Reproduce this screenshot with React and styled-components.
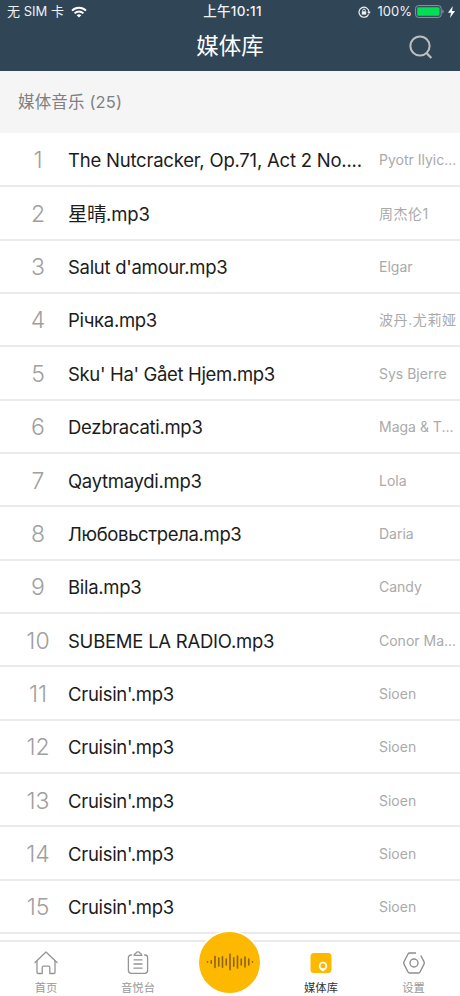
import styled, { createGlobalStyle } from "styled-components";

const GlobalStyle = createGlobalStyle`
  * {
    box-sizing: border-box;
  }
  body {
    margin: 0;
    background: #fff;
    font-family: Inter, "Noto Sans CJK SC", sans-serif;
  }
`;

const Screen = styled.div`
  width: 460px;
  height: 996px;
  display: flex;
  flex-direction: column;
  overflow: hidden;
  background: #fff;
`;

const Header = styled.header`
  height: 71px;
  flex: none;
  background: #304556;
  color: #fff;
`;

const StatusBar = styled.div`
  height: 23px;
  padding: 0 5px 0 7px;
  display: grid;
  grid-template-columns: 1fr auto 1fr;
  align-items: center;
  font-size: 13px;
  line-height: 23px;
  color: #eef2f5;
`;

const StatusGroup = styled.div`
  display: flex;
  align-items: center;
  justify-content: ${(props) => (props.$end ? "flex-end" : "flex-start")};
  gap: ${(props) => (props.$end ? "4px" : "7px")};
`;

const BatteryLevel = styled.span`
  margin: 0 -1px 0 3px;
`;

const Clock = styled.div`
  padding-left: 3px;
  font-weight: 500;
  font-size: 13.5px;
  letter-spacing: 0.3px;
`;

const TitleBar = styled.div`
  height: 48px;
  padding: 0 27px 0 0;
  display: grid;
  grid-template-columns: 1fr auto 1fr;
  align-items: center;
`;

const PageTitle = styled.h1`
  grid-column: 2;
  margin: 0 0 2px 27px;
  font-size: 22.5px;
  font-weight: 400;
  line-height: 32px;
`;

const SearchButton = styled.button`
  justify-self: end;
  display: flex;
  padding: 0;
  border: 0;
  background: none;
`;

const SectionTitle = styled.h2`
  height: 62px;
  flex: none;
  margin: 0;
  padding-left: 18px;
  background: #f5f5f5;
  color: #808080;
  font-size: 16.5px;
  font-weight: 400;
  line-height: 62px;
  letter-spacing: 0.15px;
`;

const List = styled.ul`
  height: 801.2px;
  flex: none;
  margin: 0;
  padding: 0.8px 0 0;
  list-style: none;
  display: grid;
  grid-template-rows: repeat(15, 1fr);
`;

const Row = styled.li`
  display: grid;
  grid-template-columns: 60px 303px 81px;
  column-gap: 8px;
  align-items: center;
  border-bottom: 2px solid #eaeaea;
  padding-top: 1.8px;
  white-space: nowrap;
`;

const Index = styled.span`
  padding-left: 16px;
  text-align: center;
  font-size: 23px;
  line-height: 28px;
  font-weight: 300;
  color: #a0a0a0;
`;

const Song = styled.span`
  font-size: 18.5px;
  line-height: 28px;
  letter-spacing: ${(props) => props.$spacing ?? -0.3}px;
  color: #1c1c1c;
`;

const Han = styled.span`
  font-size: 19.5px;
  line-height: 1;
  letter-spacing: -0.5px;
`;

const Artist = styled.span`
  font-size: 14px;
  line-height: 22px;
  letter-spacing: ${(props) => props.$spacing || 0}px;
  color: #aaa;
`;

const TabBar = styled.nav`
  height: 56px;
  flex: none;
  margin-top: 5.8px;
  display: grid;
  grid-template-columns: 92px 92px 91px 92px 93px;
  border-top: 2px solid #eaeaea;
`;

const Tab = styled.a`
  display: flex;
  flex-direction: column;
  align-items: center;
  padding-top: 8px;
  gap: 3px;
  font-size: 11.3px;
  line-height: 18px;
  color: ${(props) => (props.$active ? "#333" : "#999")};
`;

const PlayButton = styled.button`
  width: 61px;
  height: 61px;
  justify-self: center;
  margin-top: -10px;
  padding: 0;
  border: 0;
  border-radius: 50%;
  display: flex;
  align-items: center;
  justify-content: center;
  background: #fdb900;
  box-shadow: 0 0 0 1.5px #fff;
`;

const songs = [
  { title: "The Nutcracker, Op.71, Act 2 No....", artist: "Pyotr Ilyic...", spacing: -0.22 },
  { title: <><Han>星晴</Han>.mp3</>, artist: "周杰伦1", spacing: -0.1, artistSpacing: 0.5 },
  { title: "Salut d'amour.mp3", artist: "Elgar" },
  { title: "Річка.mp3", artist: "波丹.尤莉娅", artistSpacing: 0.6 },
  { title: "Sku' Ha' Gået Hjem.mp3", artist: "Sys Bjerre", spacing: -0.34 },
  { title: "Dezbracati.mp3", artist: "Maga & T..." },
  { title: "Qaytmaydi.mp3", artist: "Lola" },
  { title: "Любовьстрела.mp3", artist: "Daria", spacing: -0.36 },
  { title: "Bila.mp3", artist: "Candy" },
  { title: "SUBEME LA RADIO.mp3", artist: "Conor Ma...", spacing: -0.25 },
  { title: "Cruisin'.mp3", artist: "Sioen" },
  { title: "Cruisin'.mp3", artist: "Sioen" },
  { title: "Cruisin'.mp3", artist: "Sioen" },
  { title: "Cruisin'.mp3", artist: "Sioen" },
  { title: "Cruisin'.mp3", artist: "Sioen" },
];

function WifiIcon() {
  return (
    <svg width="16" height="12" viewBox="0 0 16 12" fill="none" stroke="#fff" strokeWidth="2">
      <path d="M1 4.6a10 10 0 0 1 14 0" />
      <path d="M3.6 7.4a6.2 6.2 0 0 1 8.8 0" />
      <path d="M8 11.6 5.7 9.3a3.3 3.3 0 0 1 4.6 0z" fill="#fff" stroke="none" />
    </svg>
  );
}

function LockIcon() {
  return (
    <svg width="13" height="12" viewBox="0 0 13 12" fill="none" stroke="#eef2f5">
      <path d="M10.6 8.2A5 5 0 1 1 11 6" strokeWidth="1.2" />
      <path d="M9.2 5.8h3.6L11 8z" fill="#eef2f5" stroke="none" />
      <rect x="3.8" y="5.3" width="4.4" height="3.3" fill="#eef2f5" stroke="none" />
      <path d="M4.7 5.5V4.4a1.3 1.3 0 0 1 2.6 0v1.1" />
    </svg>
  );
}

function BatteryIcon() {
  return (
    <svg width="29" height="13" viewBox="0 0 29 13">
      <rect x="0.6" y="0.6" width="25.6" height="11.8" rx="2.8" fill="none" stroke="#8d9aa3" />
      <rect x="2.2" y="2.2" width="22.4" height="8.6" rx="1.3" fill="#04de55" />
      <path d="M27.4 4.5c1.6.6 1.6 3.4 0 4z" fill="#8d9aa3" />
    </svg>
  );
}

function BoltIcon() {
  return (
    <svg width="7" height="12" viewBox="0 0 7 12" fill="#fff">
      <path d="M4.8 0 0 6.8h3L2 12l5-7H4z" />
    </svg>
  );
}

function SearchIcon() {
  return (
    <svg width="24" height="24" viewBox="0 0 24 24" fill="none" stroke="#bdbdbf" strokeWidth="2">
      <circle cx="11" cy="11" r="9.6" />
      <path d="m17.5 18 4.8 5" strokeWidth="2.3" />
    </svg>
  );
}

function HomeIcon() {
  return (
    <svg width="24" height="26" viewBox="0 0 24 26" fill="none" stroke="#959595" strokeWidth="1.3" strokeLinejoin="round" strokeLinecap="round">
      <path d="M1 12.5 12 2l11 10.5" />
      <path d="M3 11v11.3q0 1.2 1.2 1.2h4v-6q0-1.3 1.3-1.3h5q1.3 0 1.3 1.3v6h4q1.2 0 1.2-1.2V11" />
    </svg>
  );
}

function ClipboardIcon() {
  return (
    <svg width="24" height="26" viewBox="0 0 24 26" fill="none" stroke="#959595" strokeWidth="1.3" strokeLinecap="round">
      <path d="M5.5 5H5a2.6 2.6 0 0 0-2.6 2.6v13a2.8 2.8 0 0 0 2.8 2.8h13.6a2.8 2.8 0 0 0 2.8-2.8v-13A2.6 2.6 0 0 0 19 5h-.5" />
      <path d="M8.2 5.4c0-1.2.7-1.8 1.5-1.8.5-2.3 4.1-2.3 4.6 0 .8 0 1.5.6 1.5 1.8z" />
      <path d="M8 9.8h8M8 14h8M8 18.2h8" />
    </svg>
  );
}

function LibraryIcon() {
  return (
    <svg width="24" height="26" viewBox="0 0 24 26">
      <rect x="1.5" y="3" width="21" height="20" rx="3.5" fill="#fdb900" />
      <path d="M14 21.5c-1.5-1.2-4.2-2.8-4.2-5.6a4.2 4.2 0 0 1 8.4 0c0 2.8-2.7 4.4-4.2 5.6z" fill="#fff" />
      <circle cx="14" cy="15.8" r="2.5" fill="#fdb900" />
    </svg>
  );
}

function SettingsIcon() {
  return (
    <svg width="24" height="26" viewBox="0 0 24 26" fill="none" stroke="#8f8f8f" strokeWidth="1.4" strokeLinejoin="round">
      <path d="M14 3H7.6Q6.5 3 6 4L2 11.7q-.6 1.2 0 2.4L6 22q.5 1 1.6 1h8.8q1.1 0 1.6-1l4-7.9q.6-1.2 0-2.4L18.7 5.5" />
      <circle cx="12" cy="13" r="4" />
    </svg>
  );
}

const waveBars = [0.2, 2.5, 11, 8, 10.5, 6, 15.5, 8.5, 12, 6, 10, 6, 0.2];

function WaveIcon() {
  return (
    <svg width="48" height="20" viewBox="0 0 48 20" stroke="#8f6210" strokeWidth="1.6" strokeLinecap="round">
      {waveBars.map((h, i) => {
        const x = 1.5 + i * 3.75;
        return <path key={i} d={`M${x} ${10 - h / 2}v${h}`} />;
      })}
    </svg>
  );
}

export default function App() {
  return (
    <Screen>
      <GlobalStyle />
      <Header>
        <StatusBar>
          <StatusGroup>
            无 SIM 卡
            <WifiIcon />
          </StatusGroup>
          <Clock>上午10:11</Clock>
          <StatusGroup $end>
            <LockIcon />
            <BatteryLevel>100%</BatteryLevel>
            <BatteryIcon />
            <BoltIcon />
          </StatusGroup>
        </StatusBar>
        <TitleBar>
          <PageTitle>媒体库</PageTitle>
          <SearchButton aria-label="搜索">
            <SearchIcon />
          </SearchButton>
        </TitleBar>
      </Header>
      <SectionTitle>媒体音乐 (25)</SectionTitle>
      <List>
        {songs.map((song, i) => (
          <Row key={i}>
            <Index>{i + 1}</Index>
            <Song $spacing={song.spacing}>{song.title}</Song>
            <Artist $spacing={song.artistSpacing}>{song.artist}</Artist>
          </Row>
        ))}
      </List>
      <TabBar>
        <Tab>
          <HomeIcon />
          首页
        </Tab>
        <Tab>
          <ClipboardIcon />
          音悦台
        </Tab>
        <PlayButton aria-label="播放">
          <WaveIcon />
        </PlayButton>
        <Tab $active>
          <LibraryIcon />
          媒体库
        </Tab>
        <Tab>
          <SettingsIcon />
          设置
        </Tab>
      </TabBar>
    </Screen>
  );
}
